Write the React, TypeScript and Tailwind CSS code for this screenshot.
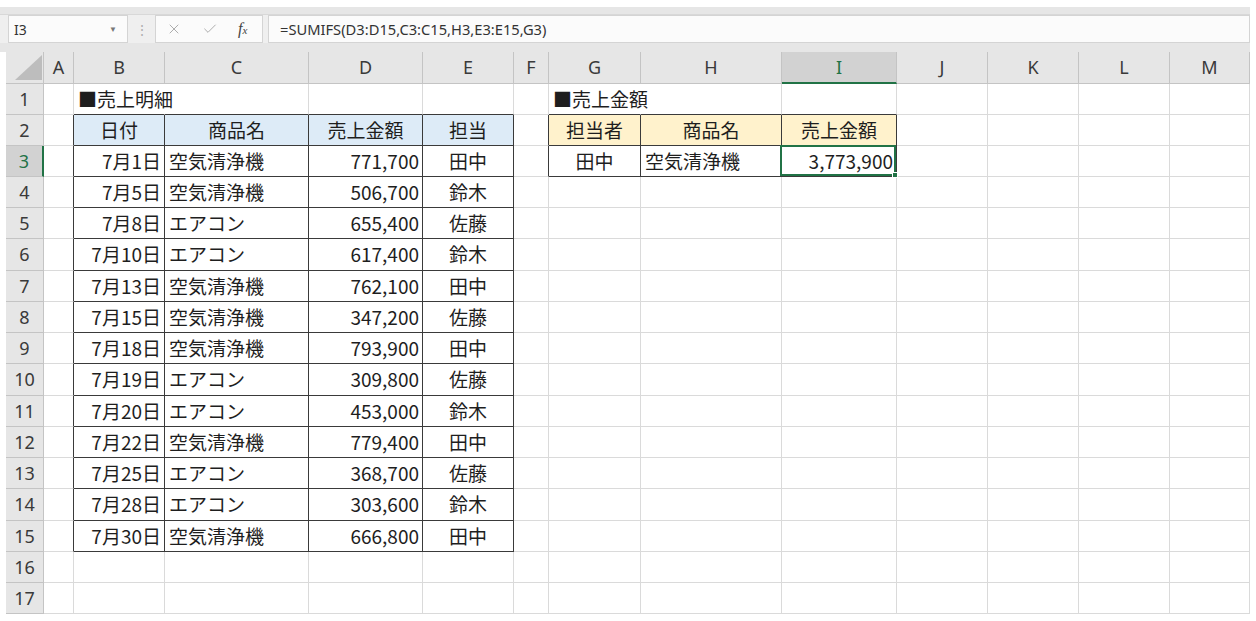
import { Check, X } from "lucide-react";

const cols = ["A", "B", "C", "D", "E", "F", "G", "H", "I", "J", "K", "L", "M"];

const rowHeights = ["h-[31px]", "h-[31px]", "h-[31px]", "h-[31px]", "h-[31px]", "h-[32px]", "h-[31px]", "h-[31px]", "h-[31px]", "h-[32px]", "h-[31px]", "h-[31px]", "h-[31px]", "h-[32px]", "h-[31px]", "h-[31px]", "h-[31px]"];

const sales = [
  ["7月1日", "空気清浄機", "771,700", "田中"],
  ["7月5日", "空気清浄機", "506,700", "鈴木"],
  ["7月8日", "エアコン", "655,400", "佐藤"],
  ["7月10日", "エアコン", "617,400", "鈴木"],
  ["7月13日", "空気清浄機", "762,100", "田中"],
  ["7月15日", "空気清浄機", "347,200", "佐藤"],
  ["7月18日", "空気清浄機", "793,900", "田中"],
  ["7月19日", "エアコン", "309,800", "佐藤"],
  ["7月20日", "エアコン", "453,000", "鈴木"],
  ["7月22日", "空気清浄機", "779,400", "田中"],
  ["7月25日", "エアコン", "368,700", "佐藤"],
  ["7月28日", "エアコン", "303,600", "鈴木"],
  ["7月30日", "空気清浄機", "666,800", "田中"],
];

type Spec = {
  text?: string;
  align?: "left" | "right" | "center";
  bg?: "blue" | "yellow";
  darkRight?: boolean;
  darkBottom?: boolean;
  overflow?: boolean;
  selected?: boolean;
};

function cellSpec(r: number, c: string): Spec {
  const s: Spec = {};
  const inT1Col = ["B", "C", "D", "E"].includes(c);
  const inT2Col = ["G", "H", "I"].includes(c);
  // titles spill into the next cell, so no grid line on their right
  if (r === 1 && c === "B") {
    s.text = "■売上明細";
    s.overflow = true;
  }
  if (r === 1 && c === "G") {
    s.text = "■売上金額";
    s.overflow = true;
  }
  if (r === 1 && (inT1Col || inT2Col)) s.darkBottom = true;
  if (c === "A" && r >= 2 && r <= 15) s.darkRight = true;
  if (c === "F" && r >= 2 && r <= 3) s.darkRight = true;

  if (inT1Col && r >= 2 && r <= 15) {
    s.darkRight = true;
    s.darkBottom = true;
    const i = ["B", "C", "D", "E"].indexOf(c);
    if (r === 2) {
      s.text = ["日付", "商品名", "売上金額", "担当"][i];
      s.align = "center";
      s.bg = "blue";
    } else {
      s.text = sales[r - 3][i];
      s.align = (["right", "left", "right", "center"] as const)[i];
    }
  }
  if (inT2Col && r >= 2 && r <= 3) {
    s.darkRight = true;
    s.darkBottom = true;
    const i = ["G", "H", "I"].indexOf(c);
    if (r === 2) {
      s.text = ["担当者", "商品名", "売上金額"][i];
      s.align = "center";
      s.bg = "yellow";
    } else {
      s.text = ["田中", "空気清浄機", "3,773,900"][i];
      s.align = (["center", "left", "right"] as const)[i];
      if (c === "I") s.selected = true;
    }
  }
  return s;
}

function Cell({ spec, height }: { spec: Spec; height: string }) {
  const bg = spec.bg === "blue" ? "bg-[#ddebf7]" : spec.bg === "yellow" ? "bg-[#fff2cc]" : "bg-white";
  const br = spec.darkRight ? "border-r-[#3a3a3a]" : spec.overflow ? "border-r-white" : "border-r-[#dadada]";
  const bb = spec.darkBottom ? "border-b-[#3a3a3a]" : "border-b-[#dadada]";
  const align =
    spec.align === "right" ? "justify-end pr-[3px]" : spec.align === "center" ? "justify-center" : "justify-start pl-[4px]";
  return (
    <div
      className={`relative flex items-center ${height} ${bg} border-r border-b ${br} ${bb} ${align} whitespace-nowrap text-[19px] text-[#1e1e1e] ${
        spec.overflow ? "z-[2]" : ""
      }`}
    >
      {spec.text}
      {spec.selected && (
        <div className="absolute -left-[2px] -top-[1px] right-0 bottom-0 z-10 border-2 border-[#217346]">
          <div className="absolute -right-[4px] -bottom-[4px] w-[6px] h-[6px] bg-[#217346] border border-white" />
        </div>
      )}
    </div>
  );
}

export default function App() {
  return (
    <div
      className="w-[1256px] h-[621px] bg-white overflow-hidden"
      style={{ fontFamily: '"Noto Sans CJK JP", "Noto Sans", sans-serif' }}
    >
      <div className="h-[7px]" />
      {/* formula bar */}
      <div className="w-[1250px] h-[45px] bg-[#e6e6e6] pt-[7px]">
        <div className="flex h-[29px] items-stretch bg-[#efefef] border-t border-[#d8d8d8]">
          <div className="ml-[8px] w-[120px] bg-[#fbfbfb] border border-[#d4d4d4] flex items-center justify-between px-[5px] text-[14px] text-[#333] font-['Noto_Sans']">
            <span>I3</span>
            <span className="text-[8px] text-[#777] mr-[5px]">▼</span>
          </div>
          <div className="w-[27px] flex items-center justify-center text-[#b0b0b0] text-[14px]">⋮</div>
          <div className="w-[108px] bg-[#fbfbfb] border border-[#d4d4d4] flex items-center pl-[10px] gap-[20px]">
            <X size={16} strokeWidth={1.3} className="text-[#a0a0a0]" />
            <Check size={16} strokeWidth={1.3} className="text-[#a0a0a0]" />
            <span className="italic text-[16px] text-[#444] font-['Liberation_Serif'] leading-none">
              f<span className="text-[11px]">x</span>
            </span>
          </div>
          <div className="ml-[5px] flex-1 bg-[#fbfbfb] border border-[#d4d4d4] flex items-center pl-[11px] text-[14.7px] text-[#333] font-['Noto_Sans']">
            =SUMIFS(D3:D15,C3:C15,H3,E3:E15,G3)
          </div>
        </div>
      </div>

      {/* sheet */}
      <div className="ml-[6px] w-[1244px] grid grid-cols-[38px_30px_91px_144px_114px_91px_35px_92px_141px_115px_91px_91px_91px_80px]">
        <div className="relative h-[32px] bg-[#e6e6e6] border-r border-b border-[#c4c4c4]">
          <svg className="absolute left-[9px] top-[3px]" width="27" height="25" viewBox="0 0 27 25">
            <polygon points="27,0 27,25 0,25" fill="#bdbdbd" />
          </svg>
        </div>
        {cols.map((c) => (
          <div
            key={c}
            className={`h-[32px] flex items-center justify-center text-[18px] font-['Noto_Sans'] border-r ${
              c === "I"
                ? "bg-[#d2d2d2] text-[#217346] border-b-2 border-b-[#217346] border-r-[#c4c4c4]"
                : "bg-[#e6e6e6] text-[#3a3a3a] border-b border-[#c4c4c4]"
            }`}
          >
            {c}
          </div>
        ))}

        {rowHeights.map((h, idx) => {
          const r = idx + 1;
          return [
            <div
              key={`h${r}`}
              className={`${h} flex items-center justify-center text-[18px] font-['Noto_Sans'] border-b ${
                r === 3
                  ? "bg-[#d2d2d2] text-[#217346] border-r-2 border-r-[#217346] border-b-[#c4c4c4]"
                  : "bg-[#e6e6e6] text-[#3a3a3a] border-r border-[#c4c4c4]"
              }`}
            >
              {r}
            </div>,
            ...cols.map((c) => <Cell key={`${c}${r}`} spec={cellSpec(r, c)} height={h} />),
          ];
        })}
      </div>
    </div>
  );
}
